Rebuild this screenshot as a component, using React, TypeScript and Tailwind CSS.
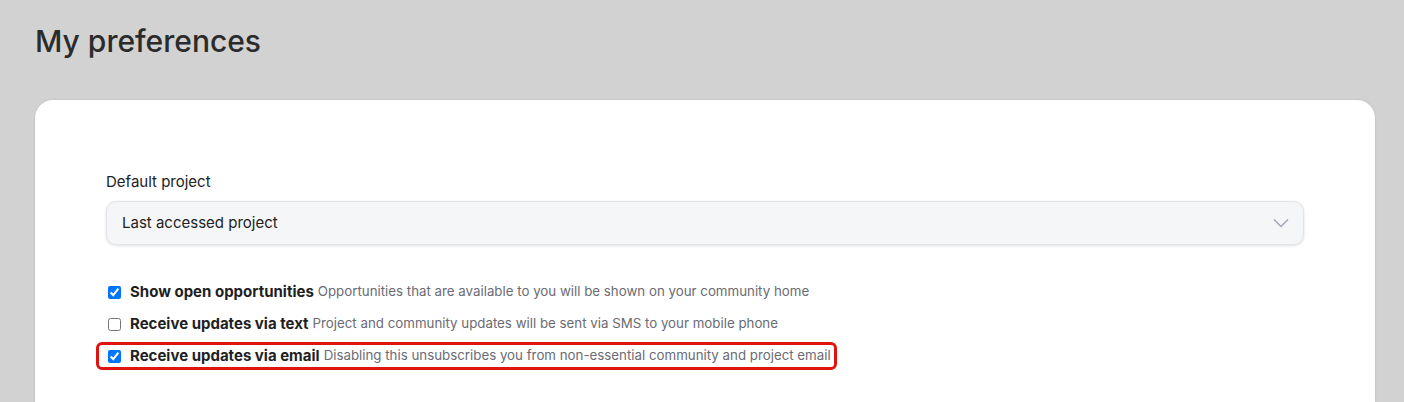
import { useState } from 'react';

const rows = [
  {
    key: 'opportunities',
    label: 'Show open opportunities',
    hint: 'Opportunities that are available to you will be shown on your community home',
    initial: true,
  },
  {
    key: 'text',
    label: 'Receive updates via text',
    hint: 'Project and community updates will be sent via SMS to your mobile phone',
    initial: false,
  },
  {
    key: 'email',
    label: 'Receive updates via email',
    hint: 'Disabling this unsubscribes you from non-essential community and project email',
    initial: true,
    highlight: true,
  },
];

export default function App() {
  const [checked, setChecked] = useState<Record<string, boolean>>(
    Object.fromEntries(rows.map((r) => [r.key, r.initial]))
  );

  return (
    <div className="min-h-screen bg-[#d2d2d2] pl-[35px] pr-[29px] pt-[21px] font-['Inter',sans-serif] text-[#222]">
      <h1 className="text-[30px] font-medium leading-[40px] text-[#2b2b2b]">My preferences</h1>

      <div className="mt-[39px] h-[320px] rounded-[18px] bg-white px-[71px] pt-[72px] shadow-[0_0_2px_rgba(0,0,0,0.15)]">
        <label className="block text-[15px] leading-[20px] text-[#222]">Default project</label>
        <div className="mt-[9px] flex h-[44px] items-center justify-between rounded-[10px] border border-[#e3e4e8] bg-[#f5f6f8] pl-[15px] pr-[14px] shadow-[0_1px_3px_rgba(0,0,0,0.12)]">
          <span className="text-[15px] text-[#222]">Last accessed project</span>
          <svg width="16" height="10" viewBox="0 0 16 10" fill="none">
            <path d="M1 1.5l7 7 7-7" stroke="#a3a6b4" strokeWidth="1.5" />
          </svg>
        </div>

        <div className="mt-[37px] flex flex-col gap-[12px]">
          {rows.map((r) => (
            <div
              key={r.key}
              className={
                r.highlight
                  ? '-my-[4px] -ml-[10px] flex h-[28px] w-fit items-center rounded-[6px] border-[3px] border-[#e0140f] pl-[7px] pr-[3px]'
                  : 'flex h-[20px] items-center'
              }
            >
              <input
                type="checkbox"
                checked={checked[r.key]}
                onChange={(e) => setChecked({ ...checked, [r.key]: e.target.checked })}
                className="my-0 ml-[2px] mr-0 h-[13px] w-[13px] accent-[#0075ff]"
              />
              <span className="ml-[9px] text-[15px] font-bold text-[#1f1f1f]">{r.label}</span>
              <span className="ml-[4px] text-[13.3px] text-[#6b6b73]">{r.hint}</span>
            </div>
          ))}
        </div>
      </div>
    </div>
  );
}
